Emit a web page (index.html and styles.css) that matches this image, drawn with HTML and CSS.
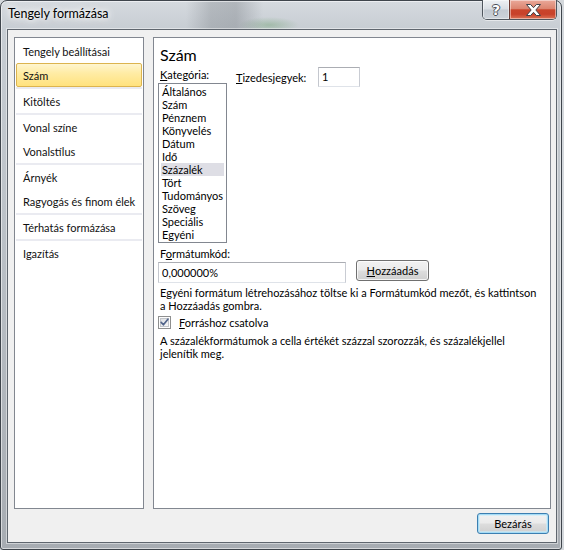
FILE: index.html
```html
<!DOCTYPE html>
<html lang="hu">
<head>
<meta charset="utf-8">
<title>Tengely formázása</title>
<link rel="stylesheet" href="styles.css">
</head>
<body>
<div class="window">
  <div class="titlebar">
    <span class="title">Tengely formázása</span>
    <div class="caption-buttons">
      <div class="cap cap-help">?</div>
      <div class="cap cap-close">
        <svg width="15" height="12" viewBox="0 0 15 12"><path d="M0.5 0.5H4.6L7.5 3.7L10.4 0.5H14.5L9.8 6L14.5 11.5H10.4L7.5 8.3L4.6 11.5H0.5L5.2 6Z" fill="#fff" stroke="#3e4249" stroke-width="1" stroke-linejoin="round"/></svg>
      </div>
    </div>
  </div>
  <div class="client">
    <div class="panels">
      <ul class="nav">
        <li class="nav-item">Tengely beállításai</li>
        <li class="nav-item selected">Szám</li>
        <li class="nav-sep"></li>
        <li class="nav-item">Kitöltés</li>
        <li class="nav-sep"></li>
        <li class="nav-item">Vonal színe</li>
        <li class="nav-item">Vonalstílus</li>
        <li class="nav-sep"></li>
        <li class="nav-item">Árnyék</li>
        <li class="nav-item">Ragyogás és finom élek</li>
        <li class="nav-sep"></li>
        <li class="nav-item">Térhatás formázása</li>
        <li class="nav-sep"></li>
        <li class="nav-item">Igazítás</li>
      </ul>
      <div class="content">
        <h2 class="heading">Szám</h2>
        <div class="row-top">
          <div class="cat-col">
            <div class="label"><span class="acc">K</span>ategória:</div>
            <ul class="listbox">
              <li>Általános</li>
              <li>Szám</li>
              <li>Pénznem</li>
              <li>Könyvelés</li>
              <li>Dátum</li>
              <li>Idő</li>
              <li class="selected">Százalék</li>
              <li>Tört</li>
              <li>Tudományos</li>
              <li>Szöveg</li>
              <li>Speciális</li>
              <li>Egyéni</li>
            </ul>
          </div>
          <div class="decimals">
            <span class="dec-label"><span class="acc">T</span>izedesjegyek:</span>
            <div class="textbox dec-box">1</div>
          </div>
        </div>
        <div class="label code-label">F<span class="acc">o</span>rmátumkód:</div>
        <div class="code-row">
          <div class="textbox code-box">0,000000%</div>
          <button class="btn add-btn"><span class="acc">H</span>ozzáadás</button>
        </div>
        <p class="text hint">Egyéni formátum létrehozásához töltse ki a Formátumkód mezőt, és kattintson<br>a Hozzáadás gombra.</p>
        <div class="check-row">
          <svg class="checkbox" width="13" height="13" viewBox="0 0 13 13">
            <defs>
              <linearGradient id="cbg" x1="0" y1="0" x2="1" y2="1">
                <stop offset="0" stop-color="#dcdee2"/>
                <stop offset="1" stop-color="#f8f8f8"/>
              </linearGradient>
            </defs>
            <rect x="0.5" y="0.5" width="12" height="12" fill="#fdfdfd" stroke="#8e8f8f"/>
            <rect x="2.5" y="2.5" width="8" height="8" fill="url(#cbg)" stroke="#c2c5ca"/>
            <path d="M3.2 6.4L5.4 8.8L9.9 3.2" fill="none" stroke="#51648a" stroke-width="1.7" stroke-linecap="round" stroke-linejoin="round"/>
          </svg>
          <span class="check-label"><span class="acc">F</span>orráshoz csatolva</span>
        </div>
        <p class="text note">A százalékformátumok a cella értékét százzal szorozzák, és százalékjellel<br>jelenítik meg.</p>
      </div>
    </div>
    <div class="footer">
      <button class="btn default close-btn">Bezárás</button>
    </div>
  </div>
</div>
</body>
</html>
```
FILE: styles.css
```css
* { box-sizing: border-box; }

html, body {
  margin: 0;
  padding: 0;
}

body {
  width: 564px;
  height: 550px;
  overflow: hidden;
  background: #d4d8dc;
  font-family: Lato, "Noto Sans", sans-serif;
  font-size: 11px;
  color: #000;
}

.window {
  width: 562px;
  height: 550px;
  border: 1px solid #3f454c;
  border-radius: 7px 7px 3px 3px;
  padding: 0 4px 6px 6px;
  display: flex;
  flex-direction: column;
  background:
    linear-gradient(90deg, rgba(0,0,0,0) 185px, rgba(70,76,82,0.22) 210px, rgba(70,76,82,0.25) 235px, rgba(0,0,0,0) 262px) 0 0 / 100% 29px no-repeat,
    radial-gradient(ellipse 30px 8px at 268px 24px, rgba(90,150,90,0.35), rgba(90,150,90,0)) 0 0 / 100% 29px no-repeat,
    linear-gradient(180deg, #d5dadf 0px, #c7cdd3 28px, #bcc2c8 220px, #a7acb2 550px);
  box-shadow: inset 0 0 0 1px rgba(255,255,255,0.55);
}

/* title bar */
.titlebar {
  height: 28px;
  flex: none;
  display: flex;
  justify-content: space-between;
  align-items: flex-start;
}

.title {
  margin: 5px 0 0 1px;
  font-size: 12.5px;
  line-height: 16px;
  color: #000;
  text-shadow: 0 0 5px #fff, 0 0 9px rgba(255,255,255,0.95), 0 0 14px rgba(255,255,255,0.85);
}

.caption-buttons {
  margin-top: -1px;
  display: flex;
  height: 20px;
  border: 1px solid #4f565e;
  border-top: none;
  border-radius: 0 0 5px 5px;
  overflow: hidden;
  box-shadow: 0 1px 0 rgba(255,255,255,0.5);
}

.cap {
  display: flex;
  align-items: center;
  justify-content: center;
  box-shadow: inset 0 0 0 1px rgba(255,255,255,0.45);
}

.cap-help {
  width: 26px;
  background: linear-gradient(180deg, #eef1f4 0%, #d9dee4 48%, #c3cad2 52%, #ccd2d9 100%);
  color: #fff;
  font-family: "DejaVu Sans", sans-serif;
  font-weight: bold;
  font-size: 14px;
  line-height: 14px;
  padding-top: 1px;
  text-shadow: 1px 0 0 #4a4f56, -1px 0 0 #4a4f56, 0 1px 0 #4a4f56, 0 -1px 0 #4a4f56;
}

.cap-close {
  width: 47px;
  border-left: 1px solid #6b3a33;
  background: linear-gradient(180deg, #eaa99a 0%, #dc8570 45%, #c9442b 52%, #c8412a 75%, #dc7457 100%);
}

/* client area */
.client {
  flex: 1;
  border: 1px solid #5f666e;
  background: #f0f0f0;
  padding: 7px 5px 0 6px;
  display: flex;
  flex-direction: column;
  box-shadow: 0 0 0 1px rgba(255,255,255,0.45);
}

.panels {
  height: 472px;
  display: flex;
  gap: 9px;
}

/* navigation list */
.nav {
  width: 130px;
  margin: 0;
  padding: 1px 0 0;
  list-style: none;
  background: #fff;
  border: 1px solid #828790;
}

.nav-item {
  height: 24px;
  display: flex;
  align-items: center;
  padding-left: 8px;
  white-space: nowrap;
  color: #111;
}

.nav-item.selected {
  margin: 0 1px;
  padding-left: 6px;
  border: 1px solid #dcb44f;
  border-radius: 2px;
  background: linear-gradient(180deg, #fff6d0 0%, #ffeca6 40%, #ffe27e 100%);
}

.nav-sep {
  height: 2px;
  margin: 0 1px;
  background: #eaebf1;
}

/* content panel */
.content {
  flex: 1;
  background: #fff;
  border: 1px solid #828790;
  padding: 7px 0 0 4px;
}

.heading {
  margin: 0 0 0 2px;
  font-size: 16px;
  font-weight: normal;
  line-height: 20px;
}

.acc { text-decoration: underline; }

.label {
  margin-left: 2px;
  line-height: 14px;
  white-space: nowrap;
}

.row-top {
  margin-top: 2px;
  display: flex;
  align-items: flex-start;
}

.cat-col {
  width: 69px;
  display: flex;
  flex-direction: column;
}

.cat-col .label {
  margin: 1px 0 1px 2px;
}

.listbox {
  height: 160px;
  margin: 0;
  padding: 1px;
  list-style: none;
  border: 1px solid #828790;
  background: #fff;
}

.listbox li {
  line-height: 13px;
  height: 13px;
  padding-left: 2px;
  white-space: nowrap;
}

.listbox li.selected {
  background: #dedee5;
  margin: 0 1px 0 1px;
  padding-left: 1px;
}

.decimals {
  margin-left: 9px;
  display: flex;
  align-items: center;
}

.dec-label {
  width: 82px;
  white-space: nowrap;
}

.textbox {
  height: 20px;
  border: 1px solid;
  border-color: #abadb3 #c9ccd3 #dfe3e9 #c4c7ce;
  background: #fff;
  padding: 0 3px;
  line-height: 18px;
  white-space: nowrap;
}

.dec-box {
  width: 42px;
}

.code-label {
  margin-top: 4px;
  line-height: 13px;
}

.code-row {
  display: flex;
  align-items: flex-start;
}

.code-box {
  width: 188px;
  height: 21px;
  line-height: 19px;
  margin-top: 2px;
}

.btn {
  font-family: inherit;
  font-size: 11px;
  color: #000;
  padding: 0;
  height: 21px;
  border: 1px solid #707070;
  border-radius: 3px;
  background: linear-gradient(180deg, #f2f2f2 0%, #ebebeb 48%, #dddddd 52%, #cfcfcf 100%);
  box-shadow: inset 0 0 0 1px rgba(255,255,255,0.75);
  display: flex;
  align-items: center;
  justify-content: center;
}

.add-btn {
  width: 73px;
  margin-left: 10px;
}

.text {
  margin: 0 0 0 2px;
  line-height: 13px;
  white-space: nowrap;
}

.hint { margin-top: 3px; }

.check-row {
  margin-top: 4px;
  display: flex;
  align-items: center;
  height: 13px;
}

.checkbox { flex: none; display: block; }

.check-label {
  margin-left: 8px;
  line-height: 13px;
}

.note { margin-top: 5px; }

/* footer */
.footer {
  padding-top: 4px;
  display: flex;
  justify-content: flex-end;
}

.close-btn {
  width: 72px;
  margin-right: 2px;
}

.btn.default {
  border-color: #3c7fb1;
  box-shadow: inset 0 0 0 1px #a6dcf6, inset 0 0 0 2px rgba(200,236,252,0.6);
}
```
